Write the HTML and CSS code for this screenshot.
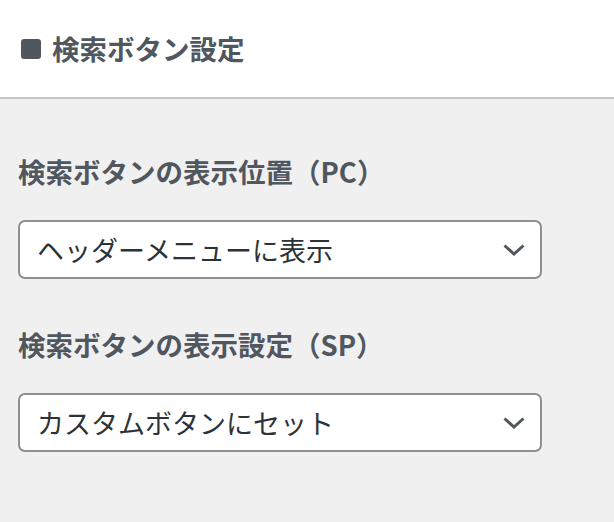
FILE: index.html
```html
<!DOCTYPE html>
<html lang="ja">
<head>
<meta charset="UTF-8">
<meta name="viewport" content="width=device-width, initial-scale=1.0">
<title>検索ボタン設定</title>
<link rel="stylesheet" href="styles.css">
</head>
<body>

<div class="panel-header">
    <span class="mark"></span>
    <h2>検索ボタン設定</h2>
</div>

<div class="panel-body">
    <div class="field">
        <label for="searchPc">検索ボタンの表示位置（PC）</label>
        <div class="select-wrap">
            <select id="searchPc">
                <option>ヘッダーメニューに表示</option>
                <option>表示しない</option>
            </select>
            <svg class="chevron" width="22" height="12" viewBox="0 0 22 12"><path d="M1.5 1.5 L11 10 L20.5 1.5" fill="none" stroke="#50575e" stroke-width="3"/></svg>
        </div>
    </div>
    <div class="field">
        <label for="searchSp">検索ボタンの表示設定（SP）</label>
        <div class="select-wrap">
            <select id="searchSp">
                <option>カスタムボタンにセット</option>
                <option>表示しない</option>
            </select>
            <svg class="chevron" width="22" height="12" viewBox="0 0 22 12"><path d="M1.5 1.5 L11 10 L20.5 1.5" fill="none" stroke="#50575e" stroke-width="3"/></svg>
        </div>
    </div>
</div>

</body>
</html>
```

FILE: styles.css
```css
body {
    font-family: "Noto Sans CJK JP", "Noto Sans", sans-serif;
    background-color: #f0f0f1;
    color: #50575e;
    margin: 0;
    padding: 0;
}

.panel-header {
    display: flex;
    align-items: center;
    gap: 11px;
    height: 99px;
    padding: 0 21px;
    box-sizing: border-box;
    background-color: #fff;
    border-bottom: 2px solid #c3c4c7;
}

.mark {
    width: 20px;
    height: 20px;
    border-radius: 3px;
    background-color: #50575e;
}

.panel-header h2 {
    margin: 0;
    font-size: 27.5px;
    font-weight: bold;
    line-height: 1;
}

.panel-body {
    padding: 54px 18px 0;
}

.field {
    margin-bottom: 47px;
}

label {
    display: block;
    font-size: 27.5px;
    font-weight: bold;
    line-height: 36px;
    margin-bottom: 31px;
}

.select-wrap {
    position: relative;
    width: 524px;
}

select {
    appearance: none;
    display: block;
    width: 100%;
    height: 59px;
    padding: 0 50px 0 17px;
    font-family: inherit;
    font-size: 27px;
    color: #2c3338;
    background-color: #fff;
    border: 2px solid #8c8f94;
    border-radius: 7px;
}

.chevron {
    position: absolute;
    right: 17px;
    top: 24px;
    pointer-events: none;
}
```
